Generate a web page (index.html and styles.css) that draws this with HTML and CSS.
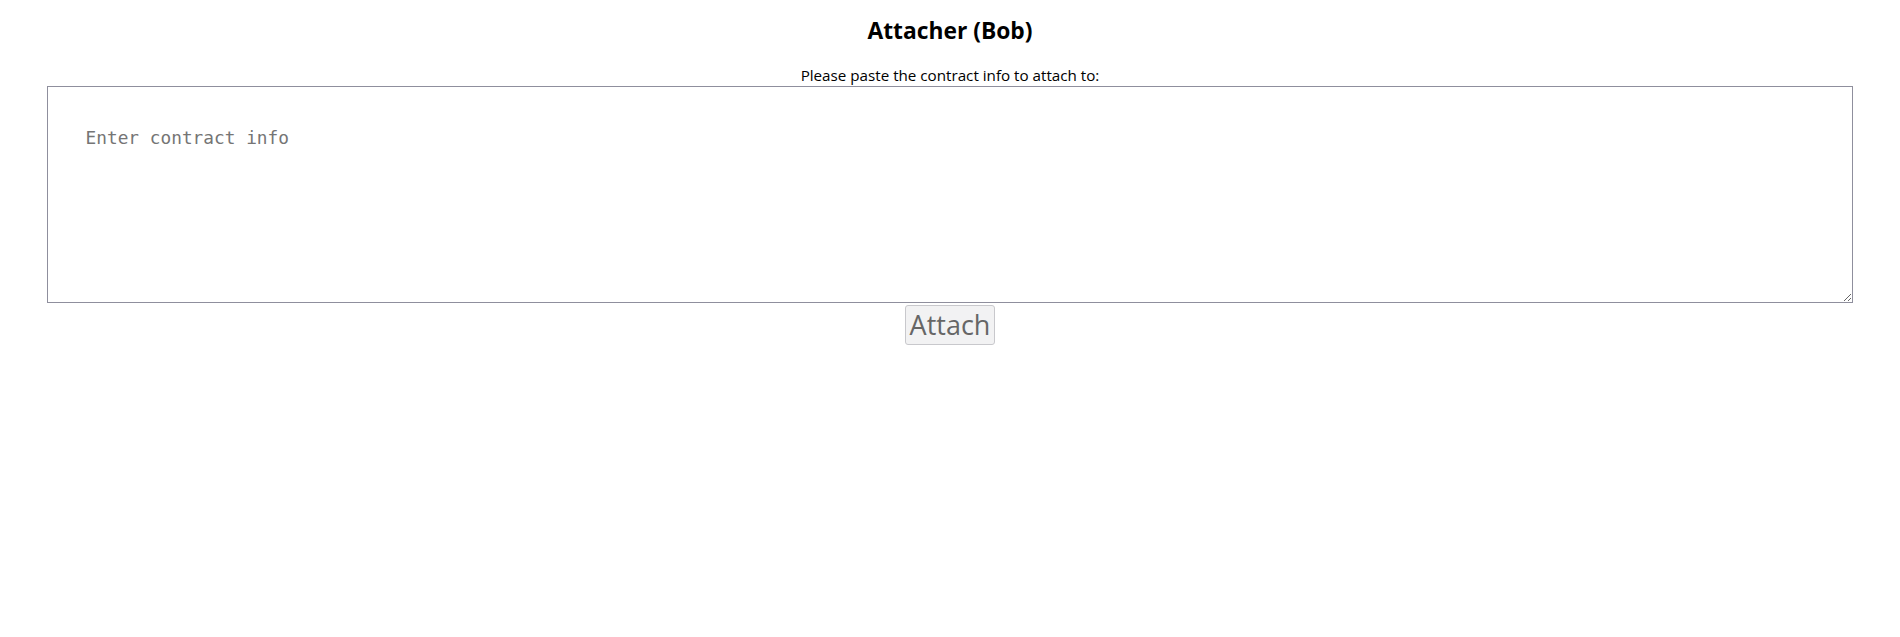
FILE: index.html
```html
<!DOCTYPE html>
<html>
<head>
<meta charset="utf-8">
<title>Attacher (Bob)</title>
<link rel="stylesheet" href="styles.css">
</head>
<body>
<main class="page">
  <h1 class="title">Attacher (Bob)</h1>
  <label class="prompt" for="info">Please paste the contract info to attach to:</label>
  <textarea id="info" class="info" placeholder="Enter contract info"></textarea>
  <button class="attach" disabled>Attach</button>
</main>
</body>
</html>
```

FILE: styles.css
```css
html, body {
  margin: 0;
  padding: 0;
  background: #ffffff;
}

.page {
  display: flex;
  flex-direction: column;
  align-items: center;
  font-family: "Open Sans", "Noto Sans", sans-serif;
  color: #000;
}

.title {
  margin: 16px 0 0 0;
  font-size: 22.8px;
  font-weight: 700;
  line-height: 30px;
}

.prompt {
  margin-top: 20px;
  margin-bottom: 2px;
  font-size: 15.2px;
  line-height: 18px;
}

.info {
  box-sizing: border-box;
  width: 95.1%;
  height: 217px;
  margin: 0;
  padding: 40px 38px;
  border: 1px solid #8f8f9d;
  border-radius: 0;
  font-family: "DejaVu Sans Mono", "Liberation Mono", monospace;
  font-size: 17.8px;
  line-height: 22px;
  resize: both;
  outline: none;
}

.info::placeholder {
  color: #757575;
}

.attach {
  margin-top: 2px;
  height: 40px;
  padding: 0 4px;
  border: 1px solid #c8c8cc;
  border-radius: 3px;
  background: #f2f2f3;
  color: #666666;
  font-family: "Open Sans", "Noto Sans", sans-serif;
  font-size: 27px;
  line-height: 36px;
}
```
